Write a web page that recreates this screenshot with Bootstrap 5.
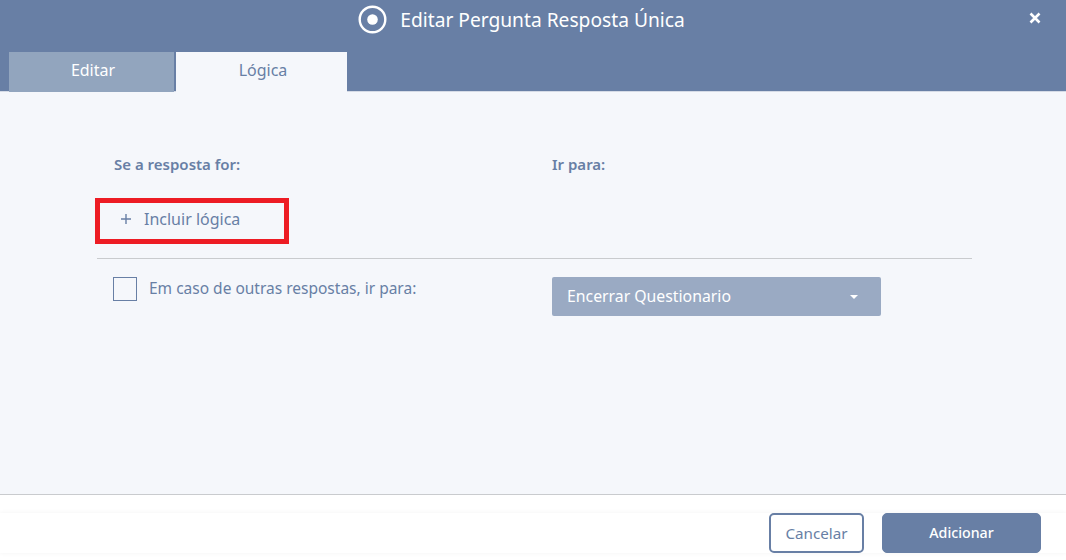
<!DOCTYPE html>
<html lang="pt">
<head>
<meta charset="utf-8">
<title>Editar Pergunta</title>
<link href="https://cdn.jsdelivr.net/npm/bootstrap@5.3.0/dist/css/bootstrap.min.css" rel="stylesheet">
<style>
html,body{height:560px;overflow:hidden;}
body{font-family:"Noto Sans","Liberation Sans",sans-serif;color:#687fa5;background:#fff;font-size:15px;}
.dlg{height:560px;}
.dlg-head{background:#687fa5;height:92px;border-bottom:1px solid #d5dbe6;}
.title-row{height:40px;margin-bottom:12px;padding-right:23px;color:#fff;font-size:19.2px;}
.radio-ic{width:29px;height:29px;margin-right:13px;margin-top:-2px;}
.close-ic{position:absolute;right:25px;top:12px;width:12px;height:12px;}
.tabs-row{padding-left:9px;gap:2px;height:39px;}
.tab-a,.tab-b{height:40px;font-size:16px;padding:0 0 5px 3px;}
.tab-a{width:165px;background:#92a5be;color:#fff;}
.tab-b{width:171px;background:#f5f7fb;color:#687fa5;}
.dlg-body{background:#f5f7fb;height:403px;border-bottom:1px solid #c9cbce;padding:56px 94px 0 97px;}
.col-one{width:455px;}
.head-txt{font-weight:600;font-size:15px;padding-left:17px;height:50px;padding-top:5px;}
.add-box{width:194px;height:46px;margin-left:-2px;border:5px solid #ed1c24;padding:0 0 4px 20px;font-size:16px;gap:12px;}
.plus-ic{width:12px;height:12px;}
.add-row{height:61px;border-bottom:1px solid #c9cbce;}
.other-row{padding-top:18px;}
.chk{width:24px;height:24px;border:1px solid #687fa5;margin-left:16px;margin-right:12px;flex:none;}
.other-txt{font-size:15.5px;line-height:20px;padding-top:1px;}
.sel{width:329px;height:39px;background:#9aaac3;color:#fff;border-radius:2px;padding:0 23px 0 15px;font-size:15.8px;}
.caret-ic{width:0;height:0;border-left:4px solid transparent;border-right:4px solid transparent;border-top:4px solid #fff;}
.dlg-foot{height:65px;background:#fff;padding-top:18px;}
.foot-band{height:40px;box-shadow:0 0 5px rgba(0,0,0,.05);padding-right:25px;gap:18px;}
.btn-c,.btn-d{height:40px;border-radius:5px;padding:0;}
.btn-c{width:95px;background:#fff;border:2px solid #687fa5;color:#687fa5;font-size:15.2px;}
.btn-d{width:159px;background:#687fa5;border:1px solid #687fa5;color:#fff;font-weight:500;font-size:14.2px;}
</style>
</head>
<body>
<div class="dlg d-flex flex-column">
  <header class="dlg-head position-relative">
    <div class="title-row d-flex align-items-center justify-content-center">
      <svg class="radio-ic" viewBox="0 0 29 29"><circle cx="14.5" cy="14.5" r="12.8" fill="none" stroke="#fff" stroke-width="2.4"/><circle cx="14.5" cy="14.5" r="5.3" fill="#fff"/></svg>
      <span>Editar Pergunta Resposta Única</span>
    </div>
    <svg class="close-ic" viewBox="0 0 12 12"><path d="M1.5 1.5L10.5 10.5M10.5 1.5L1.5 10.5" stroke="#fff" stroke-width="2.6" fill="none"/></svg>
    <div class="tabs-row d-flex">
      <div class="tab-a d-flex align-items-center justify-content-center">Editar</div>
      <div class="tab-b d-flex align-items-center justify-content-center">Lógica</div>
    </div>
  </header>
  <main class="dlg-body">
    <div class="d-flex">
      <div class="col-one head-txt">Se a resposta for:</div>
      <div class="head-txt ps-0">Ir para:</div>
    </div>
    <div class="add-row">
      <div class="add-box d-flex align-items-center"><svg class="plus-ic" viewBox="0 0 12 12"><path d="M6 1V11M1 6H11" stroke="#687fa5" stroke-width="1.4" fill="none"/></svg><span>Incluir lógica</span></div>
    </div>
    <div class="other-row d-flex">
      <div class="col-one d-flex align-items-start">
        <div class="chk"></div>
        <div class="other-txt">Em caso de outras respostas, ir para:</div>
      </div>
      <div class="sel d-flex align-items-center justify-content-between"><span>Encerrar Questionario</span><i class="caret-ic"></i></div>
    </div>
  </main>
  <footer class="dlg-foot">
    <div class="foot-band d-flex justify-content-end">
      <button class="btn-c btn" type="button">Cancelar</button>
      <button class="btn-d btn" type="button">Adicionar</button>
    </div>
  </footer>
</div>
<script src="https://cdn.jsdelivr.net/npm/bootstrap@5.3.0/dist/js/bootstrap.bundle.min.js"></script>
</body>
</html>
